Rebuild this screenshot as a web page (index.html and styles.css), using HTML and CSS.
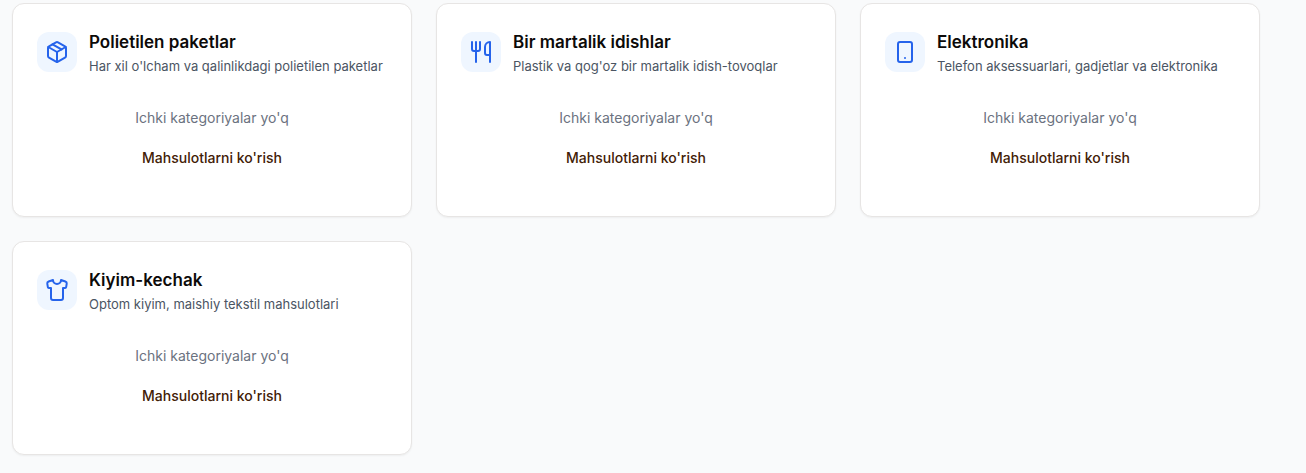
FILE: index.html
```
<!DOCTYPE html>
<html lang="uz">
<head>
<meta charset="utf-8">
<meta name="viewport" content="width=device-width, initial-scale=1">
<title>Kategoriyalar</title>
<link rel="stylesheet" href="styles.css">
</head>
<body>
<main class="categories">
  <article class="card">
    <header class="card-header">
      <span class="card-icon">
        <svg viewBox="0 0 24 24" aria-hidden="true"><path d="M11 21.73a2 2 0 0 0 2 0l7-4A2 2 0 0 0 21 16V8a2 2 0 0 0-1-1.73l-7-4a2 2 0 0 0-2 0l-7 4A2 2 0 0 0 3 8v8a2 2 0 0 0 1 1.73z"/><path d="M12 22V12"/><path d="M3.29 7 12 12l8.71-5"/><path d="m7.5 4.27 9 5.15"/></svg>
      </span>
      <div class="card-heading">
        <h2 class="card-title">Polietilen paketlar</h2>
        <p class="card-description">Har xil o'lcham va qalinlikdagi polietilen paketlar</p>
      </div>
    </header>
    <div class="card-body">
      <p class="card-empty">Ichki kategoriyalar yo'q</p>
      <button class="card-button" type="button">Mahsulotlarni ko'rish</button>
    </div>
  </article>
  <article class="card">
    <header class="card-header">
      <span class="card-icon">
        <svg viewBox="0 0 24 24" aria-hidden="true"><path d="M3 2v7c0 1.100.900 2 2 2h4a2 2 0 0 0 2-2V2"/><path d="M7 2v20"/><path d="M21 15V2a5 5 0 0 0-5 5v6c0 1.100.900 2 2 2h3Zm0 0v7"/></svg>
      </span>
      <div class="card-heading">
        <h2 class="card-title">Bir martalik idishlar</h2>
        <p class="card-description">Plastik va qog'oz bir martalik idish-tovoqlar</p>
      </div>
    </header>
    <div class="card-body">
      <p class="card-empty">Ichki kategoriyalar yo'q</p>
      <button class="card-button" type="button">Mahsulotlarni ko'rish</button>
    </div>
  </article>
  <article class="card">
    <header class="card-header">
      <span class="card-icon">
        <svg viewBox="0 0 24 24" aria-hidden="true"><rect x="5" y="2" width="14" height="20" rx="2"/><path d="M12 18h.01"/></svg>
      </span>
      <div class="card-heading">
        <h2 class="card-title">Elektronika</h2>
        <p class="card-description">Telefon aksessuarlari, gadjetlar va elektronika</p>
      </div>
    </header>
    <div class="card-body">
      <p class="card-empty">Ichki kategoriyalar yo'q</p>
      <button class="card-button" type="button">Mahsulotlarni ko'rish</button>
    </div>
  </article>
  <article class="card">
    <header class="card-header">
      <span class="card-icon">
        <svg viewBox="0 0 24 24" aria-hidden="true"><path d="M20.38 3.46 16 2a4 4 0 0 1-8 0L3.62 3.46a2 2 0 0 0-1.340 2.230l.580 3.470a1 1 0 0 0 .990.840H6v10c0 1.100.900 2 2 2h8a2 2 0 0 0 2-2V10h2.150a1 1 0 0 0 .990-.840l.580-3.470a2 2 0 0 0-1.340-2.230z"/></svg>
      </span>
      <div class="card-heading">
        <h2 class="card-title">Kiyim-kechak</h2>
        <p class="card-description">Optom kiyim, maishiy tekstil mahsulotlari</p>
      </div>
    </header>
    <div class="card-body">
      <p class="card-empty">Ichki kategoriyalar yo'q</p>
      <button class="card-button" type="button">Mahsulotlarni ko'rish</button>
    </div>
  </article>
</main>
</body>
</html>
```

FILE: styles.css
```
* {
  box-sizing: border-box;
}

body {
  margin: 0;
  background: #f9fafb;
  color: #0c0a09;
  font-family: Inter, "Liberation Sans", sans-serif;
  font-size: 14px;
  line-height: 20px;
}

h2,
p {
  margin: 0;
}

.categories {
  display: grid;
  grid-template-columns: repeat(3, minmax(0, 1fr));
  gap: 24px;
  padding: 3px 46px 18px 12px;
}

.card {
  padding: 24px 24px 40px;
  border: 1px solid #e7e5e4;
  border-radius: 12px;
  background: #fff;
  box-shadow: 0 1px 2px rgb(0 0 0 / 5%);
}

.card-header {
  display: flex;
  align-items: center;
  gap: 12px;
}

.card-icon {
  display: flex;
  flex: none;
  padding: 8px;
  border-radius: 12px;
  background: #eff6ff;
}

.card-icon svg {
  width: 24px;
  height: 24px;
  fill: none;
  stroke: #2563eb;
  stroke-width: 2;
  stroke-linecap: round;
  stroke-linejoin: round;
}

.card-title {
  font-size: 17px;
  font-weight: 600;
  line-height: 28px;
}

.card-description {
  color: #4b5563;
  font-size: 13px;
}

.card-body {
  display: flex;
  flex-direction: column;
  align-items: center;
  gap: 12px;
  padding-top: 32px;
}

.card-empty {
  color: #6b7280;
}

.card-button {
  height: 36px;
  padding: 0 12px;
  border: 0;
  border-radius: 8px;
  background: transparent;
  color: #422006;
  font: inherit;
  font-weight: 500;
  cursor: pointer;
}
```
